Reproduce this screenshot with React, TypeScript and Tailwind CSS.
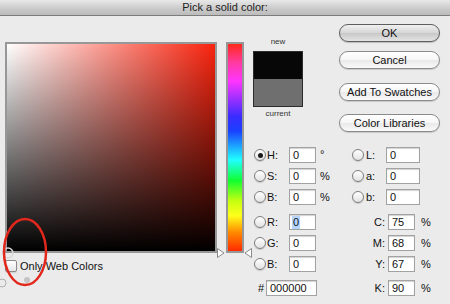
import React from "react";

function Radio({ on }: { on?: boolean }) {
  return (
    <span className="w-[12px] h-[12px] rounded-full border border-[#7e7e7e] bg-[linear-gradient(to_bottom,#ffffff,#e2e2e2)] shadow-[0_1px_1px_rgba(0,0,0,0.15)] flex items-center justify-center shrink-0">
      {on && <span className="w-[5px] h-[5px] rounded-full bg-[#1a1a1a]" />}
    </span>
  );
}

function Field({ value, w, sel }: { value: string; w: string; sel?: boolean }) {
  return (
    <span
      className={`h-[16px] border border-[#a2a2a2] bg-white shadow-[inset_0_1px_1px_rgba(0,0,0,0.18)] flex items-center pl-[3px] text-[11px] leading-none text-[#111] shrink-0 ${w}`}
    >
      {sel ? <span className="bg-[#b5d5ff] px-[1px] -ml-[1px] py-[1px]">{value}</span> : value}
    </span>
  );
}

function Btn({ label, primary }: { label: string; primary?: boolean }) {
  return (
    <div
      className={
        primary
          ? "w-[101px] h-[18px] rounded-full border border-[#5e5e5e] bg-[linear-gradient(to_bottom,#f0f0f0,#d6d6d6_50%,#c8c8c8_52%,#e4e4e4)] shadow-[0_1px_1px_rgba(0,0,0,0.2)] flex items-center justify-center text-[11px] text-[#111] leading-none"
          : "w-[101px] h-[18px] rounded-full border border-[#8a8a8a] bg-[linear-gradient(to_bottom,#ffffff,#f6f6f6_50%,#e9e9e9_52%,#fafafa)] shadow-[0_1px_1px_rgba(0,0,0,0.15)] flex items-center justify-center text-[11px] text-[#111] leading-none"
      }
    >
      {label}
    </div>
  );
}

// left half of a value row: radio, label, input, unit
function LeftCell({ k, v, unit, on, sel }: { k: string; v: string; unit?: string; on?: boolean; sel?: boolean }) {
  return (
    <div className="w-[99px] flex items-center">
      <span className="ml-[1px]">
        <Radio on={on} />
      </span>
      <span className="ml-[1px] w-[22px] text-[11px] text-[#111]">{k}</span>
      <Field value={v} w="w-[27px]" sel={sel} />
      {unit && <span className={unit === "°" ? "ml-[4px] text-[11px] self-start -mt-[1px]" : "ml-[4px] text-[11px]"}>{unit}</span>}
    </div>
  );
}

function LabCell({ k, v }: { k: string; v: string }) {
  return (
    <div className="flex items-center">
      <Radio />
      <span className="ml-[2px] w-[20px] text-[11px] text-[#111]">{k}</span>
      <Field value={v} w="w-[34px]" />
    </div>
  );
}

function CmykCell({ k, v }: { k: string; v: string }) {
  return (
    <div className="flex items-center">
      <span className="w-[36px] text-right pr-[3px] text-[11px] text-[#111]">{k}</span>
      <Field value={v} w="w-[27px]" />
      <span className="ml-[6px] text-[11px] text-[#111]">%</span>
    </div>
  );
}

export default function App() {
  return (
    <div className="w-[450px] h-[304px] bg-[#ebebeb] relative overflow-hidden font-['Liberation_Sans',Arial,sans-serif] text-[#111]">
      {/* title bar */}
      <div className="h-[16px] border-b border-[#7c7c7c] bg-[linear-gradient(to_bottom,#e9e9e9,#c9c9c9_60%,#bcbcbc)] flex items-center justify-center text-[11px] text-[#222] leading-none">
        Pick a solid color:
      </div>

      <div className="flex pt-[8px]">
        {/* colour field + hue slider */}
        <div className="ml-[5px] mt-[18px] flex flex-col">
          <div className="flex">
            <div className="w-[212px] h-[211px] border-2 border-[#979797] bg-[linear-gradient(to_top,#000000,rgba(0,0,0,0)),linear-gradient(to_right,#ffffff,#f8230e)]" />
            <div className="relative ml-[9px] w-[18px] h-[211px] border-2 border-[#979797] bg-[linear-gradient(to_bottom,#ff2a1a_0%,#ff3aa0_9%,#ff34ff_18%,#3a2cff_35%,#1a40ff_42%,#20ffff_56%,#10ff30_66%,#c8ff10_76%,#ffff1a_83%,#ff8a00_91%,#ff2a00_100%)]">
              <svg className="absolute -left-[11px] bottom-[-7px]" width="8" height="10" viewBox="0 0 8 10">
                <path d="M0.5 0.5 L7 5 L0.5 9.5 Z" fill="#fff" stroke="#8a8a8a" />
              </svg>
              <svg className="absolute -right-[10px] bottom-[-7px]" width="8" height="10" viewBox="0 0 8 10">
                <path d="M7.5 0.5 L1 5 L7.5 9.5 Z" fill="#fff" stroke="#8a8a8a" />
              </svg>
            </div>
          </div>
          <div className="mt-[5px] flex items-center">
            <span className="w-[12px] h-[12px] rounded-[2px] border border-[#8a8a8a] bg-[linear-gradient(to_bottom,#ffffff,#e6e6e6)] shadow-[0_1px_1px_rgba(0,0,0,0.12)]" />
            <span className="ml-[3px] text-[11px] text-[#111]">Only Web Colors</span>
          </div>
        </div>

        {/* right side */}
        <div className="ml-[9px] flex flex-col">
          <div className="flex">
            <div className="w-[50px] pt-[13px] flex flex-col items-center">
              <span className="h-[10px] text-[8px] leading-[10px] text-[#333]">new</span>
              <div className="mt-[4px] w-[50px] h-[56px] border border-[#2c2c2c] flex flex-col">
                <div className="h-[27px] bg-[#070707]" />
                <div className="flex-1 bg-[#6f6f6f]" />
              </div>
              <span className="mt-[2px] h-[10px] text-[8px] leading-[10px] text-[#333]">current</span>
            </div>
            <div className="ml-[36px] flex flex-col">
              <Btn label="OK" primary />
              <div className="mt-[9px]">
                <Btn label="Cancel" />
              </div>
              <div className="mt-[14px]">
                <Btn label="Add To Swatches" />
              </div>
              <div className="mt-[13px]">
                <Btn label="Color Libraries" />
              </div>
            </div>
          </div>

          <div className="mt-[15px] flex flex-col">
            <div className="flex h-[16px] items-center">
              <LeftCell k="H:" v="0" unit="°" on />
              <LabCell k="L:" v="0" />
            </div>
            <div className="mt-[5px] flex h-[16px] items-center">
              <LeftCell k="S:" v="0" unit="%" />
              <LabCell k="a:" v="0" />
            </div>
            <div className="mt-[5px] flex h-[16px] items-center">
              <LeftCell k="B:" v="0" unit="%" />
              <LabCell k="b:" v="0" />
            </div>
            <div className="mt-[9px] flex h-[16px] items-center">
              <LeftCell k="R:" v="0" sel />
              <CmykCell k="C:" v="75" />
            </div>
            <div className="mt-[5px] flex h-[16px] items-center">
              <LeftCell k="G:" v="0" />
              <CmykCell k="M:" v="68" />
            </div>
            <div className="mt-[5px] flex h-[16px] items-center">
              <LeftCell k="B:" v="0" />
              <CmykCell k="Y:" v="67" />
            </div>
            <div className="mt-[8px] flex h-[16px] items-center">
              <div className="w-[99px] flex items-center">
                <span className="ml-[5px] w-[7px] text-[11px]">#</span>
                <span className="ml-[1px]">
                  <Field value="000000" w="w-[51px]" />
                </span>
              </div>
              <CmykCell k="K:" v="90" />
            </div>
          </div>
        </div>
      </div>

      {/* annotation drawn over the dialog */}
      <svg className="absolute left-0 top-[215px] pointer-events-none" width="60" height="85" viewBox="0 0 60 85">
        <circle cx="8" cy="38" r="5" fill="none" stroke="#d8d8d8" strokeWidth="1.5" />
        <circle cx="2" cy="68" r="4" fill="none" stroke="#b0b0b0" strokeWidth="1" />
        <circle cx="27" cy="65" r="3" fill="#c4c4c4" />
        <ellipse cx="25" cy="37" rx="21" ry="33" fill="none" stroke="#e2281c" strokeWidth="2.5" />
      </svg>
    </div>
  );
}
